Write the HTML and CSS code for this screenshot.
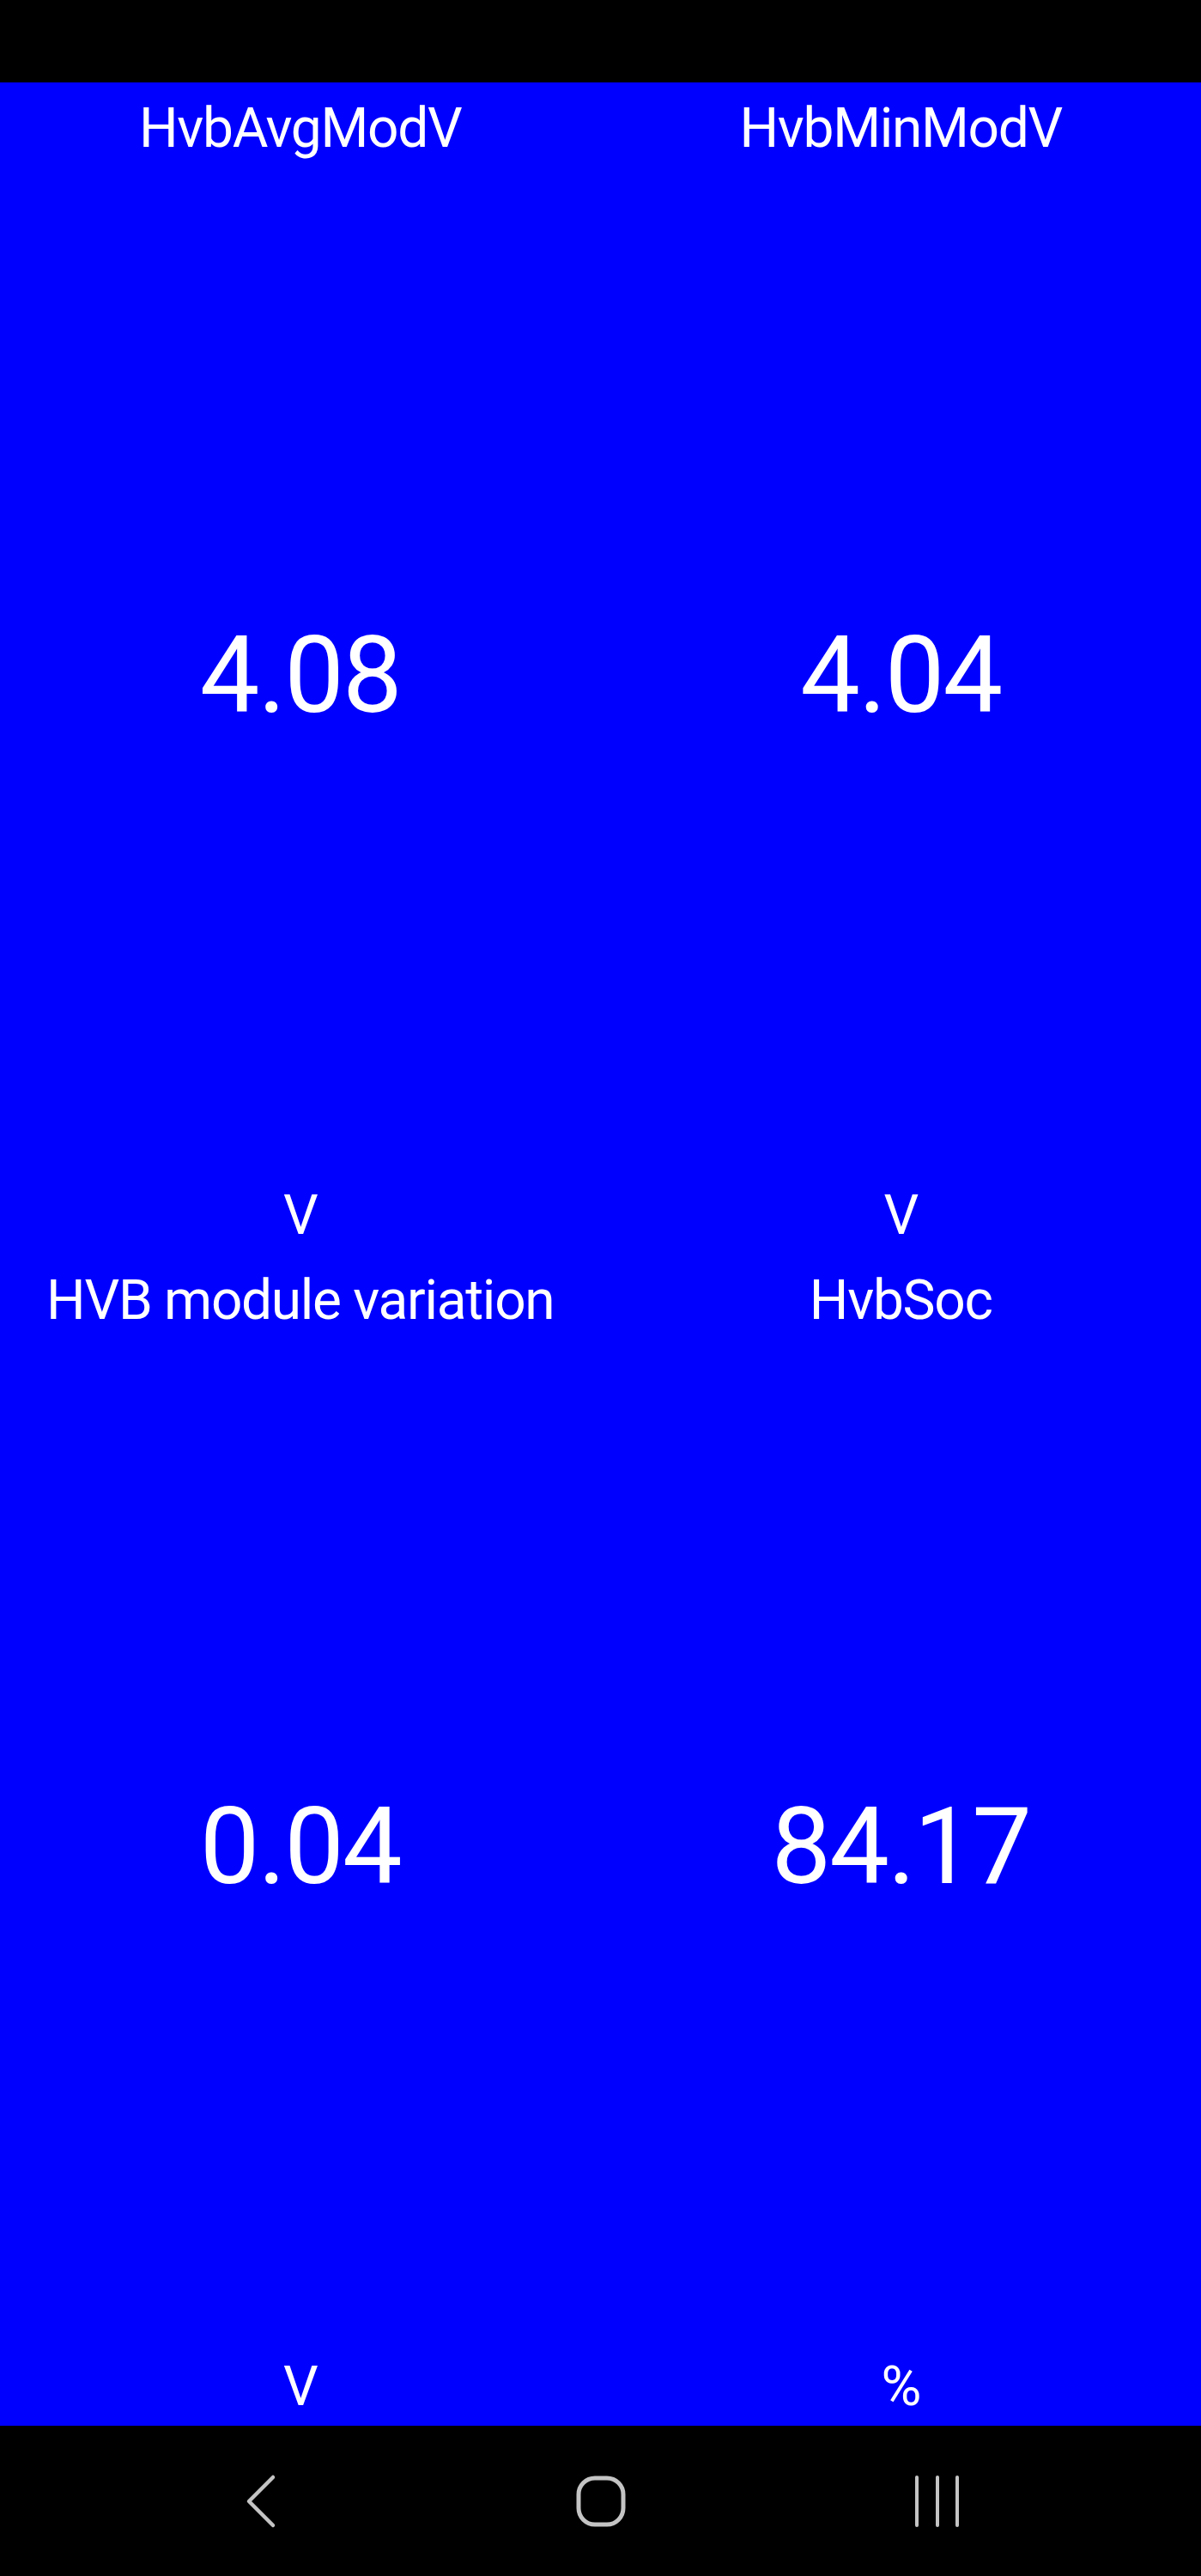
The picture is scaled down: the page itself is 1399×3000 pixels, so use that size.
FILE: index.html
```html
<!DOCTYPE html>
<html>
<head>
<meta charset="utf-8">
<link rel="stylesheet" href="styles.css">
</head>
<body>
<div class="status-bar"></div>
<main class="grid">
  <section class="cell">
    <div class="label">HvbAvgModV</div>
    <div class="value">4.08</div>
    <div class="unit">V</div>
  </section>
  <section class="cell">
    <div class="label">HvbMinModV</div>
    <div class="value">4.04</div>
    <div class="unit">V</div>
  </section>
  <section class="cell">
    <div class="label">HVB module variation</div>
    <div class="value">0.04</div>
    <div class="unit">V</div>
  </section>
  <section class="cell">
    <div class="label">HvbSoc</div>
    <div class="value">84.17</div>
    <div class="unit">%</div>
  </section>
</main>
<nav class="nav-bar">
  <div class="nav-slot">
    <svg class="icon-back" width="40" height="64" viewBox="0 0 40 64">
      <polyline points="34,4 6,32 34,60" fill="none" stroke="#c4c4c4" stroke-width="4.5" stroke-linecap="round" stroke-linejoin="round"/>
    </svg>
  </div>
  <div class="nav-slot">
    <svg class="icon-home" width="64" height="64" viewBox="0 0 64 64">
      <rect x="6" y="5" width="52" height="54" rx="19" ry="19" fill="none" stroke="#c4c4c4" stroke-width="5"/>
    </svg>
  </div>
  <div class="nav-slot">
    <svg class="icon-recent" width="64" height="64" viewBox="0 0 64 64">
      <line x1="8" y1="4" x2="8" y2="60" stroke="#c4c4c4" stroke-width="4" stroke-linecap="round"/>
      <line x1="32" y1="4" x2="32" y2="60" stroke="#c4c4c4" stroke-width="4" stroke-linecap="round"/>
      <line x1="55" y1="4" x2="55" y2="60" stroke="#c4c4c4" stroke-width="4" stroke-linecap="round"/>
    </svg>
  </div>
</nav>
</body>
</html>
```
FILE: styles.css
```css
html, body {
  margin: 0;
  padding: 0;
  background: #000;
}
body {
  width: 1399px;
  height: 3000px;
  overflow: hidden;
  font-family: Roboto, "Noto Sans", "Liberation Sans", sans-serif;
  color: #fff;
}
.status-bar {
  height: 96px;
  background: #000;
}
.grid {
  height: 2729px;
  background: #0000ff;
  display: grid;
  grid-template-columns: 1fr 1fr;
  grid-template-rows: 1fr 1fr;
}
.cell {
  display: flex;
  flex-direction: column;
  align-items: center;
  padding: 16px 0 8px;
  min-height: 0;
}
.label, .unit {
  font-size: 64px;
  line-height: 75px;
  letter-spacing: -1.3px;
  white-space: nowrap;
}
.value {
  flex: 1;
  display: flex;
  align-items: center;
  justify-content: center;
  font-size: 124px;
  line-height: 145px;
  letter-spacing: -2px;
  padding-top: 8px;
}
.nav-bar {
  height: 175px;
  background: #000;
  display: flex;
  justify-content: center;
  align-items: center;
}
.nav-slot {
  width: 392px;
  display: flex;
  justify-content: center;
  align-items: center;
}
.icon-back {
  margin-right: 8px;
}
```
